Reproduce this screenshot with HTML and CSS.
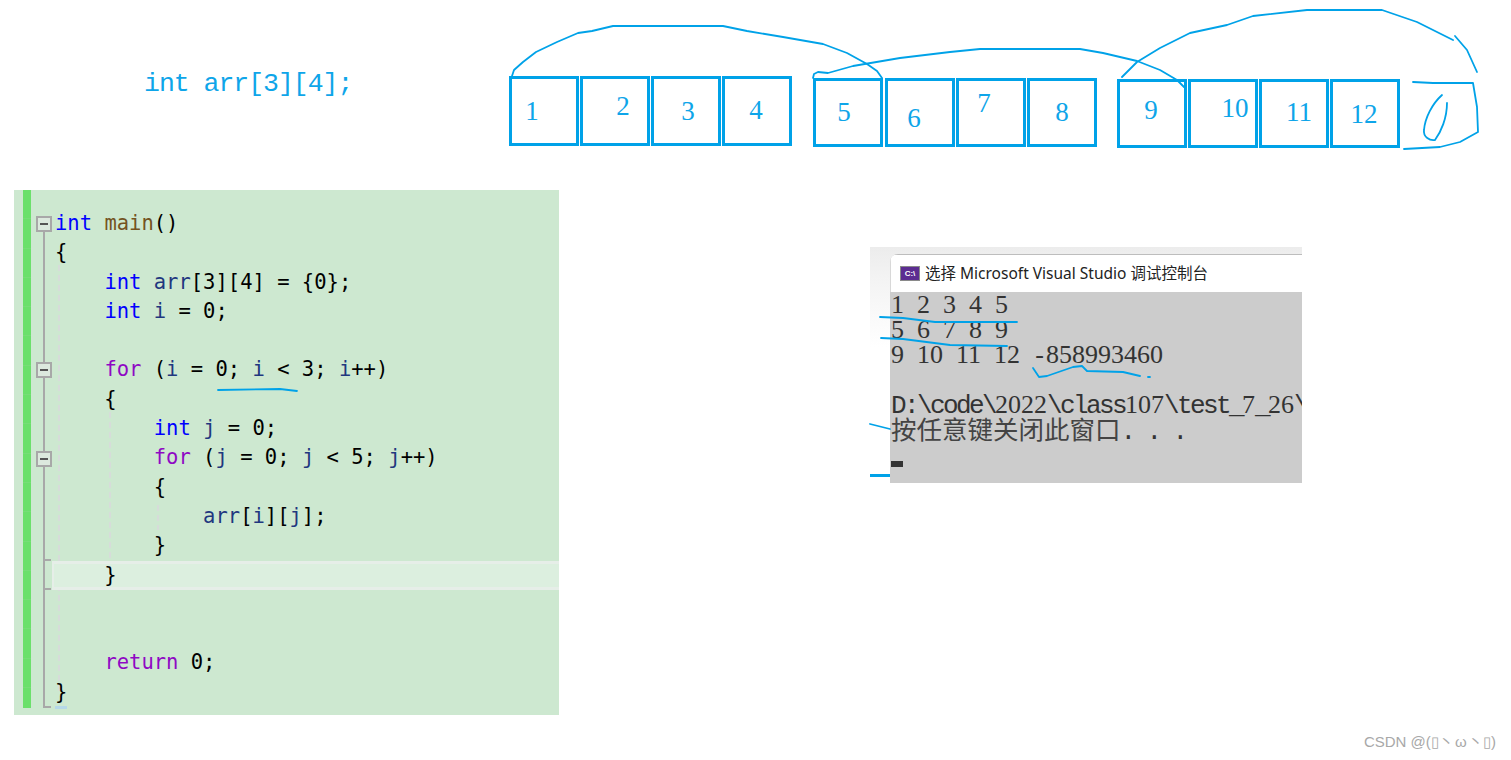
FILE: index.html
```html
<!DOCTYPE html>
<html lang="zh-CN">
<head>
<meta charset="utf-8">
<title>int arr[3][4]</title>
<link rel="stylesheet" href="styles.css">
</head>
<body>
<main class="page">
  <section class="top">
    <p class="decl">int arr[3][4];</p>
    <div class="group g1">
      <div class="cell"><span class="n1">1</span></div>
      <div class="cell"><span class="n2">2</span></div>
      <div class="cell"><span class="n3">3</span></div>
      <div class="cell"><span class="n4">4</span></div>
    </div>
    <div class="group g2">
      <div class="cell wide"><span class="n5">5</span></div>
      <div class="cell"><span class="n6">6</span></div>
      <div class="cell"><span class="n7">7</span></div>
      <div class="cell"><span class="n8">8</span></div>
    </div>
    <div class="group g3">
      <div class="cell"><span class="n9">9</span></div>
      <div class="cell"><span class="n10">10</span></div>
      <div class="cell"><span class="n11">11</span></div>
      <div class="cell"><span class="n12">12</span></div>
    </div>
  </section>

  <section class="bottom">
    <div class="editor">
      <div class="changebar"></div>
      <div class="foldline"></div>
      <div class="tick t1"></div>
      <div class="tick t2"></div>
      <div class="tick t3"></div>
      <div class="guide g-a"></div>
      <div class="guide g-b"></div>
      <div class="guide g-c"></div>
      <div class="current"></div>
      <div class="caretmark"></div>
      <div class="fold f1"></div>
      <div class="fold f2"></div>
      <div class="fold f3"></div>
      <pre class="code"><span class="kw">int</span> <span class="fn">main</span>()
{
    <span class="kw">int</span> <span class="var">arr</span>[3][4] = {0};
    <span class="kw">int</span> <span class="var">i</span> = 0;

    <span class="ctl">for</span> (<span class="var">i</span> = 0; <span class="var">i</span> &lt; 3; <span class="var">i</span>++)
    {
        <span class="kw">int</span> <span class="var">j</span> = 0;
        <span class="ctl">for</span> (<span class="var">j</span> = 0; <span class="var">j</span> &lt; 5; <span class="var">j</span>++)
        {
            <span class="var">arr</span>[<span class="var">i</span>][<span class="var">j</span>];
        }
    }


    <span class="ctl">return</span> 0;
}</pre>
    </div>

    <div class="console">
      <div class="window">
        <div class="titlebar">
          <span class="appicon">C:\</span>
          <span class="titletext">选择 Microsoft Visual Studio 调试控制台</span>
        </div>
        <div class="output">
          <div class="outline nums">1 2 3 4 5</div>
          <div class="outline nums">5 6 7 8 9</div>
          <div class="outline nums">9 10 11 12 <span class="dash">-</span>858993460</div>
          <div class="outline"></div>
          <div class="outline path">D:\code\<span class="dig">2022</span>\class<span class="dig">107</span>\test_<span class="dig">7</span>_<span class="dig">26</span>\</div>
          <div class="outline path prompt"><span class="cjk">按任意键关闭此窗口</span>. . .</div>
          <div class="cursor"></div>
        </div>
      </div>
    </div>
  </section>

  <svg class="sketch" width="1511" height="760" viewBox="0 0 1511 760" aria-hidden="true">
    <path class="ink" d="M512 76L514 70L523 62L536 52L557 42L578 33L592 31L613 26H723L747 31L783 37L823 44L847 53L867 64L877 71L882 78"/>
    <path class="ink" d="M813 78L814 74L818 72L828 73L853 66L900 58L950 52L980 49H1080L1103 53L1137 61L1160 70L1177 80L1184 87"/>
    <path class="ink" d="M1122 77L1137 62L1160 48L1190 33L1227 25L1253 16L1307 10H1382L1417 22L1453 40"/>
    <path class="ink" d="M1455 36L1467 50L1477 72"/>
    <path class="ink" d="M1413 82L1433 83H1473L1477 107L1478 132L1460 142L1440 147L1404 149"/>
    <path class="ink" d="M1442 95C1432 104 1425 118 1424 130C1423 137 1430 141 1435 140C1441 132 1447 118 1447 103"/>
    <path class="ink" d="M218 390L280 389L297 391"/>
    <path class="ink" d="M880 317L903 318L935 322H1017"/>
    <path class="ink" d="M881 338L903 339L950 345L1007 346"/>
    <path class="ink" d="M1033 368L1039 377L1047 376L1073 367L1082 366L1087 371L1123 372L1140 376"/>
    <path class="ink" d="M1148 377H1150"/>
    <path class="ink" d="M870 424L890 429"/>
    <path class="ink thick" d="M870 475.500H890"/>
  </svg>

  <footer class="watermark">CSDN @(▯丶&#8202;ω&#8202;丶▯)</footer>
</main>
</body>
</html>
```
FILE: styles.css
```css
* { box-sizing: border-box; }
html, body { margin: 0; padding: 0; background: #fff; }
body { overflow: hidden; }

.page {
  position: relative;
  width: 1511px;
  height: 760px;
  overflow: hidden;
}

/* top diagram */
.top {
  display: flex;
  align-items: flex-start;
  height: 190px;
  padding-left: 144px;
}
.decl {
  width: 365px;
  margin: 69px 0 0;
  font: 26.500px/30px "Liberation Mono", monospace;
  letter-spacing: -1.020px;
  color: #0ea5e9;
  white-space: pre;
}
.group { display: flex; gap: 1px; }
.g1 { margin-top: 76px; }
.g2 { margin: 78px 0 0 21px; }
.g3 { margin: 79px 0 0 20px; }
.cell {
  display: flex;
  align-items: center;
  justify-content: center;
  width: 70px;
  height: 70px;
  border: 3px solid #00a2e8;
  font: 27px/1 "Liberation Serif", serif;
  color: #0ea5e9;
}
.g2 .cell, .g3 .cell { height: 69px; }
.wide { margin-right: 1px; }
.cell span { display: block; }
.n1 { transform: translate(-12px, 0); }
.n2 { transform: translate(8px, -5px); }
.n3 { transform: translate(2px, 0); }
.n4 { transform: translate(-1px, -1px); }
.n5 { transform: translate(-4px, 0); }
.n6 { transform: translate(-6px, 6px); }
.n7 { transform: translate(-7px, -9px); }
.n8 { transform: translate(0, 0); }
.n9 { transform: translate(-1px, -3px); }
.n10 { transform: translate(12px, -5px); }
.n11 { transform: translate(5px, -1px); }
.n12 { transform: translate(-1px, 1px); }

/* lower row */
.bottom {
  display: flex;
  align-items: flex-start;
  padding-left: 14px;
}

/* code editor */
.editor {
  position: relative;
  width: 545px;
  height: 525px;
  background: #cde8d0;
}
.code {
  position: relative;
  margin: 0;
  padding: 19px 0 0 41px;
  font: 20.500px/29.300px "DejaVu Sans Mono", monospace;
  color: #000;
}
.kw { color: #0000ff; }
.fn { color: #74531f; }
.ctl { color: #8f08c4; }
.var { color: #1f377f; }

.changebar {
  position: absolute;
  left: 9px;
  top: 0;
  width: 8px;
  height: 518px;
  background: repeating-linear-gradient(#6be06b 0, #6be06b 28.300px, #77dd77 28.300px, #77dd77 29.300px);
}
.foldline {
  position: absolute;
  left: 29px;
  top: 42px;
  width: 2px;
  height: 476px;
  background: #a8a8a8;
}
.tick {
  position: absolute;
  left: 29px;
  width: 8px;
  height: 2px;
  background: #a8a8a8;
}
.t1 { top: 369px; }
.t2 { top: 398px; }
.t3 { top: 516px; }
.guide {
  position: absolute;
  width: 2px;
  background: repeating-linear-gradient(#d6dcd9 0, #d6dcd9 6px, transparent 6px, transparent 10px);
}
.g-a { left: 44px; top: 75px; height: 430px; }
.g-b { left: 95px; top: 222px; height: 150px; }
.g-c { left: 143px; top: 315px; height: 25px; }
.current {
  position: absolute;
  left: 38px;
  right: 0;
  top: 371px;
  height: 29px;
  background: #dcefdf;
  border-top: 3px solid #e6eee8;
  border-bottom: 3px solid #e6eee8;
  border-left: 2px solid #e6eee8;
}
.caretmark {
  position: absolute;
  left: 41px;
  top: 516px;
  width: 12px;
  height: 3px;
  background: #b5d8e8;
}
.fold {
  position: absolute;
  left: 22px;
  width: 16px;
  height: 16px;
  border: 2px solid #a8a8a8;
  background: #dce9de;
}
.fold::after {
  content: "";
  position: absolute;
  left: 2px;
  right: 2px;
  top: 5px;
  height: 2px;
  background: #555;
}
.f1 { top: 26px; }
.f2 { top: 172px; }
.f3 { top: 261px; }

/* console */
.console {
  width: 432px;
  height: 236px;
  margin: 57px 0 0 311px;
  padding: 7px 0 0 20px;
  background: linear-gradient(#ececec 0, #f3f3f3 30px, #fff 100px);
  overflow: hidden;
}
.window {
  height: 229px;
  background: #ccc;
  border-radius: 8px 0 0 0;
  overflow: hidden;
}
.titlebar {
  display: flex;
  align-items: center;
  gap: 5px;
  height: 38px;
  padding: 0 0 1px 9px;
  background: #fff;
  border-top: 1px solid #bdbdbd;
  border-left: 1px solid #d8d8d8;
}
.appicon {
  width: 20px;
  height: 15px;
  background: #5c2d91;
  border: 1px solid #8a8a8a;
  color: #fff;
  font: 700 8px/13px "Liberation Sans", sans-serif;
  text-align: center;
}
.titletext {
  font: 15.500px/20px "Noto Sans", "Noto Sans CJK SC", sans-serif;
  color: #222;
  white-space: nowrap;
}
.output {
  padding: 0 0 0 1px;
  color: #333;
}
.outline {
  height: 25px;
  line-height: 25px;
  white-space: pre;
}
.nums {
  font: 26px/25px "Liberation Serif", serif;
  word-spacing: 6.500px;
}
.dash {
  display: inline-block;
  width: 13px;
  text-align: center;
}
.path {
  font: 26px/25px "Liberation Mono", monospace;
  letter-spacing: -2.600px;
}
.dig {
  font-family: "Liberation Serif", serif;
  letter-spacing: 0;
}
.prompt { margin-top: -2px; }
.cjk {
  font: 25.500px/25px "Noto Sans CJK SC", sans-serif;
  letter-spacing: 0;
  color: #444;
}
.cursor {
  width: 12px;
  height: 6px;
  margin-top: 21px;
  background: #333;
}

/* hand drawn ink */
.sketch {
  position: absolute;
  left: 0;
  top: 0;
  pointer-events: none;
}
.ink {
  fill: none;
  stroke: #00a2e8;
  stroke-width: 1.800;
  stroke-linejoin: round;
  stroke-linecap: round;
}
.thick { stroke-width: 3; stroke-linecap: butt; }

.watermark {
  position: absolute;
  right: 15px;
  top: 733px;
  font: 15px/18px "Liberation Sans", "Noto Sans CJK SC", sans-serif;
  color: #a8a8a8;
  white-space: nowrap;
}
```
